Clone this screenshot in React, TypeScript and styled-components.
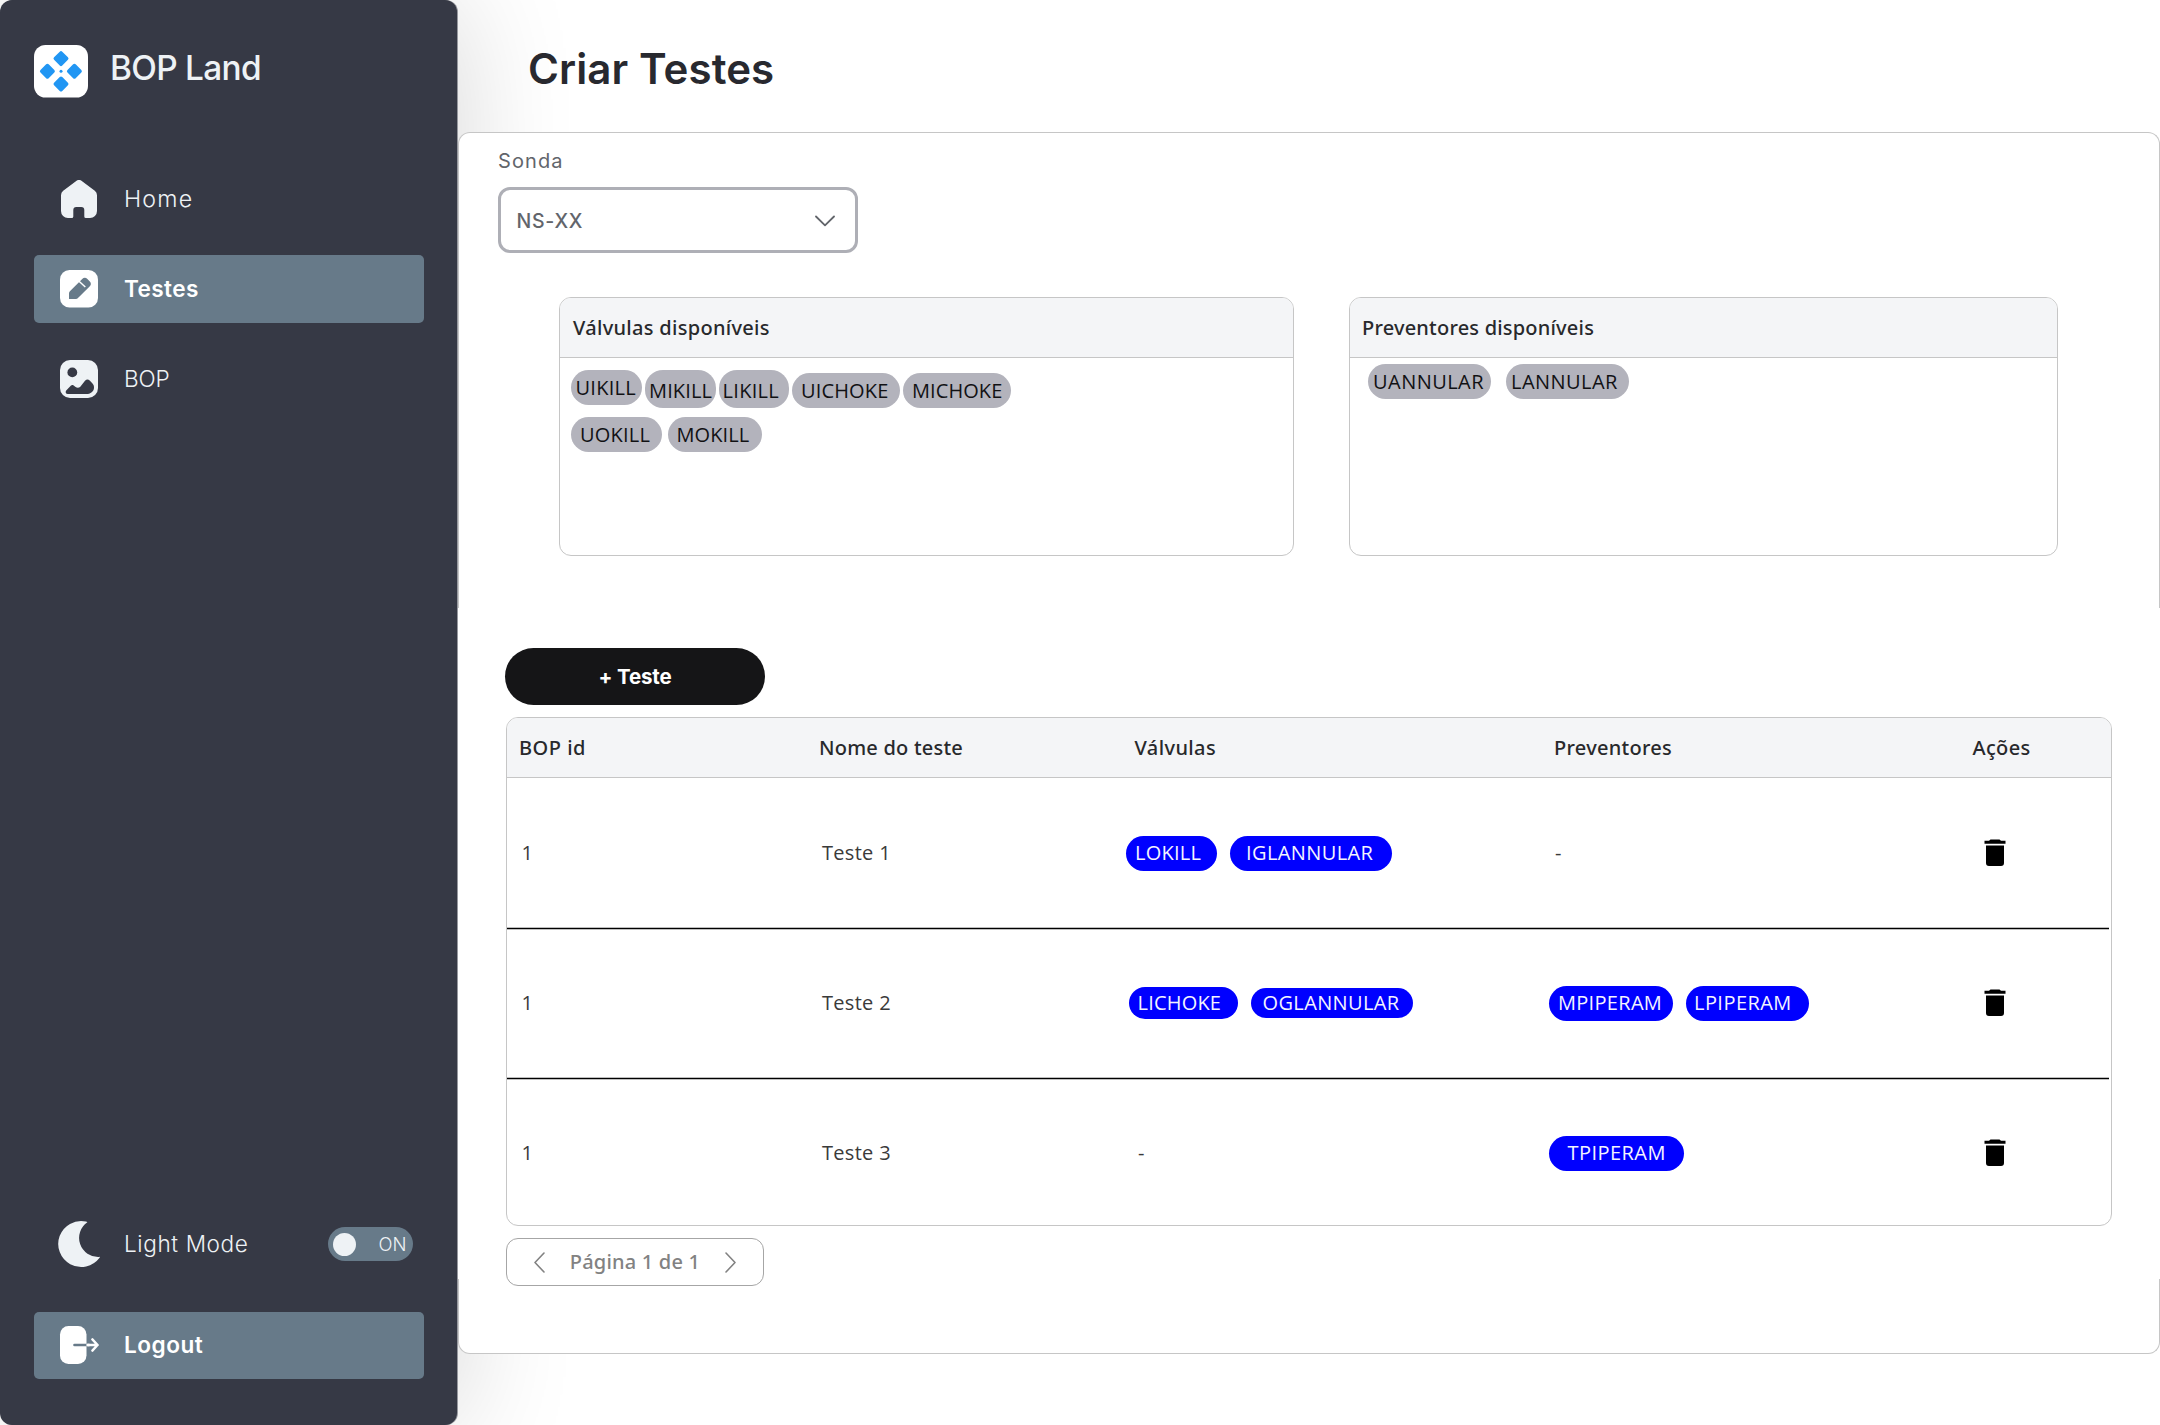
import React from 'react';
import styled, { createGlobalStyle } from 'styled-components';

const colors = {
  sidebar: '#363945',
  active: '#677a89',
  light: '#eef2f5',
  line: '#c6c6c6',
  head: '#f4f5f7',
  tag: '#b3b3bc',
  blue: '#0000ff',
};

const GlobalStyle = createGlobalStyle`
  *, *::before, *::after { box-sizing: border-box; }
  body { margin: 0; background: #fff; font-family: Inter, "Liberation Sans", sans-serif; }
  button { font: inherit; border: 0; padding: 0; background: none; cursor: pointer; }
  svg { display: block; flex: none; }
`;

const Page = styled.div`
  display: flex;
  width: 2160px;
  height: 1425px;
  overflow: hidden;
`;

/* Sidebar */

const Sidebar = styled.aside`
  flex: none;
  display: flex;
  flex-direction: column;
  width: 457px;
  height: 1425px;
  padding: 45px 33px 46px 34px;
  background: ${colors.sidebar};
  border-radius: 12px;
  box-shadow: 1px 0 0 #96989e, 0 0 120px rgba(0, 0, 0, 0.16);
`;

const Brand = styled.div`
  display: flex;
  align-items: center;
  height: 53px;
  margin-bottom: 67px;
`;

const BrandName = styled.span`
  margin: -8px 0 0 22px;
  font-size: 33.4px;
  line-height: 40px;
  font-weight: 500;
  letter-spacing: -0.7px;
  color: ${colors.light};
  white-space: nowrap;
`;

const Nav = styled.nav`
  display: flex;
  flex-direction: column;
  gap: 22.5px;
`;

const NavItem = styled.a<{ $active?: boolean }>`
  display: flex;
  align-items: center;
  height: 67.5px;
  padding-left: 23px;
  border-radius: 5px;
  background: ${(p) => (p.$active ? colors.active : 'transparent')};
  color: ${(p) => (p.$active ? '#fff' : colors.light)};
  font-weight: ${(p) => (p.$active ? 600 : 300)};
`;

const NavIcon = styled.span`
  display: flex;
  align-items: center;
  justify-content: center;
  width: 44px;
  margin-right: 23px;
`;

const NavLabel = styled.span<{ $ls: number; $size?: number }>`
  font-size: ${(p) => p.$size ?? 22.6}px;
  line-height: 30px;
  letter-spacing: ${(p) => p.$ls}px;
  white-space: nowrap;
`;

const Foot = styled.div`
  display: flex;
  flex-direction: column;
  gap: 33.5px;
  margin-top: auto;
`;

const Toggle = styled.span`
  display: flex;
  align-items: center;
  justify-content: space-between;
  width: 85px;
  height: 34px;
  margin: 0 11.5px 0 auto;
  padding: 0 6px 0 5.5px;
  border-radius: 17px;
  background: ${colors.active};
  font-size: 18.4px;
  font-weight: 300;
`;

const Knob = styled.span`
  width: 23px;
  height: 23px;
  border-radius: 50%;
  background: ${colors.light};
`;

/* Main area */

const Main = styled.main`
  flex: 1;
  display: flex;
  flex-direction: column;
  padding-left: 1px;
`;

const TitleBar = styled.header`
  display: flex;
  align-items: center;
  height: 132px;
  padding: 5px 0 0 70px;
`;

const Title = styled.h1`
  margin: 0;
  font-size: 42px;
  line-height: 52px;
  font-weight: 600;
  letter-spacing: 0.1px;
  color: #28292f;
`;

const FilterSection = styled.section`
  height: 476px;
  padding: 16px 0 0 39px;
  background: #fff;
  border: 1px solid ${colors.line};
  border-bottom: 0;
  border-radius: 12px 12px 0 0;
`;

const TableSection = styled.section`
  position: relative;
  z-index: 1;
  display: flex;
  flex-direction: column;
  align-items: flex-start;
  height: 671px;
  padding: 40px 0 0 47px;
  background: #fff;
`;

const PanelEnd = styled.div`
  height: 75px;
  border: 1px solid ${colors.line};
  border-top: 0;
  border-radius: 0 0 12px 12px;
  background: #fff;
`;

const FieldLabel = styled.label`
  display: block;
  font-size: 20px;
  line-height: 24px;
  letter-spacing: 1.1px;
  color: #62656b;
`;

const SelectBox = styled.div`
  display: flex;
  align-items: center;
  justify-content: space-between;
  width: 360px;
  height: 66px;
  margin-top: 14px;
  padding: 1px 20px 0 15.5px;
  border: 3px solid #aeafb6;
  border-radius: 12px;
  background: #fff;
  color: #62656b;
  font-size: 19.5px;
  font-weight: 500;
  letter-spacing: 0.75px;
`;

const Cards = styled.div`
  display: flex;
  gap: 55px;
  margin: 44px 0 0 61px;
`;

const Card = styled.div<{ $w: number }>`
  width: ${(p) => p.$w}px;
  height: 259px;
  border: 1px solid ${colors.line};
  border-radius: 12px;
  background: #fff;
  overflow: hidden;
`;

const CardHead = styled.div<{ $pl: number }>`
  display: flex;
  align-items: center;
  height: 60px;
  padding: 1.5px 0 0 ${(p) => p.$pl}px;
  border-bottom: 1px solid ${colors.line};
  background: ${colors.head};
`;

const HeadText = styled.span<{ $ls: number }>`
  font-family: 'Noto Sans', sans-serif;
  font-size: 20px;
  line-height: 28px;
  font-weight: 500;
  letter-spacing: ${(p) => p.$ls}px;
  color: #28292c;
  white-space: nowrap;
`;

const CardBody = styled.div<{ $pt: number; $pl: number }>`
  display: flex;
  flex-direction: column;
  gap: 9px;
  padding: ${(p) => p.$pt}px 0 0 ${(p) => p.$pl}px;
`;

const TagRow = styled.div<{ $gap: number }>`
  display: flex;
  align-items: flex-end;
  gap: ${(p) => p.$gap}px;
`;

const CenterRow = styled(TagRow)`
  align-items: center;
`;

type TagStyle = {
  $w: number;
  $h?: number;
  $pl: number;
  $pt?: number;
  $ls: number;
  $top?: boolean;
  $blue?: boolean;
};
type TagData = TagStyle & { label: string };

const Tag = styled.span<TagStyle>`
  display: flex;
  align-items: center;
  align-self: ${(p) => (p.$top ? 'flex-start' : 'auto')};
  width: ${(p) => p.$w}px;
  height: ${(p) => p.$h ?? 35}px;
  padding: ${(p) => p.$pt ?? 0}px 0 0 ${(p) => p.$pl}px;
  border-radius: 18px;
  background: ${(p) => (p.$blue ? colors.blue : colors.tag)};
  color: ${(p) => (p.$blue ? '#f4f4ff' : '#111114')};
  font-family: 'Open Sans', sans-serif;
  font-size: 20px;
  font-weight: 400;
  line-height: 22px;
  letter-spacing: ${(p) => p.$ls}px;
  white-space: nowrap;
`;

const AddButton = styled.button`
  flex: none;
  width: 260px;
  height: 57px;
  border-radius: 28.5px;
  background: #151517;
  color: #fff;
  font-size: 20.5px;
  line-height: 57px;
  font-weight: 700;
  letter-spacing: -0.15px;
`;

const Table = styled.div`
  flex: none;
  width: 1606px;
  height: 509px;
  margin: 12px 0 0 1px;
  border: 1px solid ${colors.line};
  border-radius: 12px;
  overflow: hidden;
`;

const Grid = styled.div`
  display: grid;
  grid-template-columns: 300px 314px 420px 419px 1fr;
  align-items: center;
`;

const TableHead = styled(Grid)`
  height: 60px;
  padding-top: 1px;
  border-bottom: 1px solid ${colors.line};
  background: ${colors.head};
`;

const TableRow = styled(Grid)`
  height: 150px;
`;

const Divider = styled.div`
  position: relative;
  height: 1px;
  margin: 0 2px -1px 0;
  background: #000;
  box-shadow: 0 1px 0 #bdbdbd, 0 -1px 0 #bdbdbd;
`;

const Cell = styled.div<{ $pl: number }>`
  display: flex;
  align-items: center;
  padding-left: ${(p) => p.$pl}px;
  font-family: 'Open Sans', sans-serif;
  font-size: 20px;
  font-weight: 400;
  line-height: 28px;
  letter-spacing: 0.3px;
  color: #3a3a3a;
`;

const Pager = styled.div`
  display: flex;
  align-items: center;
  justify-content: space-between;
  flex: none;
  width: 258px;
  height: 48px;
  margin: 12px 0 0 1px;
  padding: 0 27px;
  border: 1px solid #a6a6a6;
  border-radius: 12px;
  background: #fff;
`;

const PagerText = styled(HeadText)`
  color: #828282;
`;

/* Icons */

const LogoIcon = () => (
  <svg width="54" height="53" viewBox="0 0 54 53">
    <rect width="54" height="52.5" rx="11.5" fill="#fff" />
    <g fill="#2196f3">
      {[[27, 13.6], [13.4, 26.3], [40.4, 26.3], [27, 39]].map(([x, y]) => (
        <rect key={`${x}-${y}`} x={x - 5.8} y={y - 5.8} width="11.6" height="11.6" rx="1.8" transform={`rotate(45 ${x} ${y})`} />
      ))}
      <circle cx="27" cy="26.3" r="1.5" />
    </g>
  </svg>
);

const HomeIcon = () => (
  <svg width="38" height="38" viewBox="0 0 38 38" fill={colors.light}>
    <path d="M15.9 1.2a5 5 0 0 1 6.2 0L34.8 10.8A5.500 5.500 0 0 1 37 15.200V31a7 7 0 0 1-7 7h-4.200a1.500 1.500 0 0 1-1.500-1.500V30a3 3 0 0 0-3-3h-5a3 3 0 0 0-3 3v6.500A1.500 1.500 0 0 1 11.800 38H8a7 7 0 0 1-7-7V15.200a5.500 5.500 0 0 1 2.200-4.400z" />
  </svg>
);

const EditIcon = () => (
  <svg width="38" height="38" viewBox="0 0 38 38">
    <rect width="38" height="37.5" rx="9.5" fill="#fff" />
    <path fill={colors.active} d="M9 29v-5.600a3 3 0 0 1 .9-2.100L22.200 9a3.800 3.800 0 0 1 5.200 0l2.200 2.200a3.800 3.800 0 0 1 0 5.300L18 28.100a3 3 0 0 1-2.100.9z" />
    <path stroke="#fff" strokeWidth="1.5" d="M18.500 10.800l6.800 6.200" />
  </svg>
);

const ImageIcon = () => (
  <svg width="38" height="38" viewBox="0 0 38 38">
    <rect width="38" height="38" rx="10" fill={colors.light} />
    <g fill={colors.sidebar}>
      <circle cx="12.3" cy="12.4" r="4.9" />
      <path d="M6.200 30.500L11 25.600c.8-.8 1.800-.8 2.600-.2l2 1.600c1.400 1.100 3.400 1 4.700-.3L25 20.800c1.600-1.800 3.200-1.800 4.700-.4l2.800 3c1.100 1.200 1.500 2.200 1.500 4 0 4-3.400 6.600-8 6.600H7.800c-2 0-2.800-2-1.600-3.500z" />
    </g>
  </svg>
);

const MoonIcon = () => (
  <svg width="42" height="48" viewBox="-0.8 0 42 48" fill={colors.light}>
    <path d="M28.500 2.300C28.700 1.800 28 1.600 27 1.400A23 23 0 1 0 40.800 37.800C41.200 37.200 41 36.700 40.300 36.900A19 19 0 0 1 28.500 2.300z" />
  </svg>
);

const LogoutIcon = () => (
  <svg width="40" height="38" viewBox="-1 0 40 38" fill="none" strokeWidth="2.6" strokeLinecap="round" strokeLinejoin="round">
    <rect width="26.5" height="38" rx="8.5" fill="#fff" />
    <path d="M14.500 19h12" stroke={colors.active} />
    <path d="M28 19h9.500M32.500 13.500l5 5.500-5 5.500" stroke="#fff" />
    <path d="M26.500 19h3" stroke="#fff" strokeLinecap="butt" />
  </svg>
);

const ChevronDown = () => (
  <svg width="20" height="12" viewBox="0 0 20 12" fill="none" stroke="#62656b" strokeWidth="1.8" strokeLinecap="round" strokeLinejoin="round">
    <path d="M1 1.500l9 8.800 9-8.800" />
  </svg>
);

const PagerChevron = ({ dir }: { dir: 'left' | 'right' }) => (
  <svg width="11" height="21" viewBox="0 0 11 21" fill="none" stroke="#828282" strokeWidth="1.6" strokeLinecap="round" strokeLinejoin="round">
    <path d={dir === 'left' ? 'M10 1L1 10.500l9 9.500' : 'M1 1l9 9.500L1 20'} />
  </svg>
);

const TrashIcon = () => (
  <svg width="22" height="28" viewBox="0 0 22 28" fill="#000">
    <path d="M6.500.5h9l1.500 1.300h4.500v3h-21v-3h4.500zM2 6.500h18V24a3 3 0 0 1-3 3H5a3 3 0 0 1-3-3z" />
  </svg>
);

/* Data */

const valvesTop: TagData[] = [
  { label: 'UIKILL', $w: 71, $pl: 4.5, $ls: 0.25, $top: true },
  { label: 'MIKILL', $w: 70.5, $h: 38, $pl: 4, $pt: 3, $ls: 0.15 },
  { label: 'LIKILL', $w: 70.5, $h: 38, $pl: 4, $pt: 3, $ls: 0.3 },
  { label: 'UICHOKE', $w: 108, $pl: 9, $ls: 0.15 },
  { label: 'MICHOKE', $w: 108, $pl: 9, $ls: 0.08 },
];
const valvesBottom: TagData[] = [
  { label: 'UOKILL', $w: 90.5, $pl: 9, $ls: 0.2 },
  { label: 'MOKILL', $w: 94.5, $pl: 9, $ls: 0.08 },
];
const preventers: TagData[] = [
  { label: 'UANNULAR', $w: 123, $pl: 5, $ls: 0.45 },
  { label: 'LANNULAR', $w: 123, $pl: 5, $ls: 0.45 },
];

type Test = {
  id: number;
  name: string;
  valves: TagData[];
  valvesX: number;
  preventers: TagData[];
  preventersX: number;
};
const tests: Test[] = [
  {
    id: 1,
    name: 'Teste 1',
    valves: [
      { label: 'LOKILL', $w: 91, $pl: 9, $ls: 0.25 },
      { label: 'IGLANNULAR', $w: 162, $pl: 16, $ls: 0.4 },
    ],
    valvesX: 5,
    preventers: [],
    preventersX: 14,
  },
  {
    id: 1,
    name: 'Teste 2',
    valves: [
      { label: 'LICHOKE', $w: 109, $h: 32, $pl: 8.5, $ls: 0.2 },
      { label: 'OGLANNULAR', $w: 162, $h: 30, $pl: 11.5, $ls: 0.37 },
    ],
    valvesX: 8,
    preventers: [
      { label: 'MPIPERAM', $w: 123.5, $pl: 9, $ls: 0.3 },
      { label: 'LPIPERAM', $w: 123.5, $pl: 8.5, $ls: 0.45 },
    ],
    preventersX: 8,
  },
  {
    id: 1,
    name: 'Teste 3',
    valves: [],
    valvesX: 17,
    preventers: [{ label: 'TPIPERAM', $w: 135, $pl: 18.5, $ls: 0.45 }],
    preventersX: 8,
  },
];

const Tags = ({ items, blue }: { items: TagData[]; blue?: boolean }) => (
  <>
    {items.map(({ label, ...style }) => (
      <Tag key={label} {...style} $blue={blue}>
        {label}
      </Tag>
    ))}
  </>
);

const TagCell = ({ items, x }: { items: TagData[]; x: number }) => (
  <Cell $pl={x}>
    {items.length ? (
      <CenterRow $gap={13}>
        <Tags items={items} blue />
      </CenterRow>
    ) : (
      '-'
    )}
  </Cell>
);

export default function App() {
  return (
    <>
      <GlobalStyle />
      <Page>
        <Sidebar>
          <Brand>
            <LogoIcon />
            <BrandName>BOP Land</BrandName>
          </Brand>
          <Nav>
            <NavItem>
              <NavIcon><HomeIcon /></NavIcon>
              <NavLabel $ls={1.2} $size={23.2}>Home</NavLabel>
            </NavItem>
            <NavItem $active>
              <NavIcon><EditIcon /></NavIcon>
              <NavLabel $ls={0.4}>Testes</NavLabel>
            </NavItem>
            <NavItem>
              <NavIcon><ImageIcon /></NavIcon>
              <NavLabel $ls={-0.1}>BOP</NavLabel>
            </NavItem>
          </Nav>
          <Foot>
            <NavItem>
              <NavIcon><MoonIcon /></NavIcon>
              <NavLabel $ls={0.6}>Light Mode</NavLabel>
              <Toggle>
                <Knob />
                ON
              </Toggle>
            </NavItem>
            <NavItem $active>
              <NavIcon><LogoutIcon /></NavIcon>
              <NavLabel $ls={0.5}>Logout</NavLabel>
            </NavItem>
          </Foot>
        </Sidebar>
        <Main>
          <TitleBar>
            <Title>Criar Testes</Title>
          </TitleBar>
          <FilterSection>
            <FieldLabel>Sonda</FieldLabel>
            <SelectBox>
              NS-XX
              <ChevronDown />
            </SelectBox>
            <Cards>
              <Card $w={735}>
                <CardHead $pl={13}><HeadText $ls={0.3}>Válvulas disponíveis</HeadText></CardHead>
                <CardBody $pt={12} $pl={11}>
                  <TagRow $gap={3}><Tags items={valvesTop} /></TagRow>
                  <TagRow $gap={6}><Tags items={valvesBottom} /></TagRow>
                </CardBody>
              </Card>
              <Card $w={709}>
                <CardHead $pl={12}><HeadText $ls={0.2}>Preventores disponíveis</HeadText></CardHead>
                <CardBody $pt={6} $pl={18}>
                  <TagRow $gap={15}><Tags items={preventers} /></TagRow>
                </CardBody>
              </Card>
            </Cards>
          </FilterSection>
          <TableSection>
            <AddButton>+ Teste</AddButton>
            <Table>
              <TableHead>
                <Cell $pl={12}><HeadText $ls={0.5}>BOP id</HeadText></Cell>
                <Cell $pl={12}><HeadText $ls={0.22}>Nome do teste</HeadText></Cell>
                <Cell $pl={13.5}><HeadText $ls={0.4}>Válvulas</HeadText></Cell>
                <Cell $pl={13}><HeadText $ls={0.28}>Preventores</HeadText></Cell>
                <Cell $pl={12.5}><HeadText $ls={0.35}>Ações</HeadText></Cell>
              </TableHead>
              {tests.map((t, i) => (
                <React.Fragment key={t.name}>
                  {i > 0 && <Divider />}
                  <TableRow>
                    <Cell $pl={14.5}>{t.id}</Cell>
                    <Cell $pl={15}>{t.name}</Cell>
                    <TagCell items={t.valves} x={t.valvesX} />
                    <TagCell items={t.preventers} x={t.preventersX} />
                    <Cell $pl={24}><TrashIcon /></Cell>
                  </TableRow>
                </React.Fragment>
              ))}
            </Table>
            <Pager>
              <PagerChevron dir="left" />
              <PagerText $ls={0.2}>Página 1 de 1</PagerText>
              <PagerChevron dir="right" />
            </Pager>
          </TableSection>
          <PanelEnd />
        </Main>
      </Page>
    </>
  );
}
